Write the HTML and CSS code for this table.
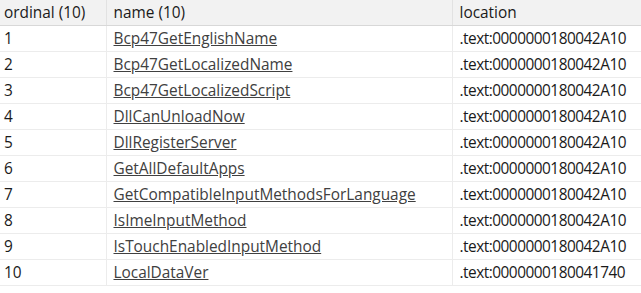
FILE: index.html
```html
<!DOCTYPE html>
<html lang="en">
<head>
  <meta charset="UTF-8">
  <title>Exports</title>
  <link rel="stylesheet" href="styles.css">
</head>
<body>
  <table class="exports">
    <colgroup>
      <col class="col-ordinal">
      <col class="col-name">
      <col class="col-location">
    </colgroup>
    <thead>
      <tr>
        <th>ordinal (10)</th>
        <th>name (10)</th>
        <th>location</th>
      </tr>
    </thead>
    <tbody>
      <tr><td>1</td><td><a href="#">Bcp47GetEnglishName</a></td><td class="loc">.text:0000000180042A10</td></tr>
      <tr><td>2</td><td><a href="#">Bcp47GetLocalizedName</a></td><td class="loc">.text:0000000180042A10</td></tr>
      <tr><td>3</td><td><a href="#">Bcp47GetLocalizedScript</a></td><td class="loc">.text:0000000180042A10</td></tr>
      <tr><td>4</td><td><a href="#">DllCanUnloadNow</a></td><td class="loc">.text:0000000180042A10</td></tr>
      <tr><td>5</td><td><a href="#">DllRegisterServer</a></td><td class="loc">.text:0000000180042A10</td></tr>
      <tr><td>6</td><td><a href="#">GetAllDefaultApps</a></td><td class="loc">.text:0000000180042A10</td></tr>
      <tr><td>7</td><td><a href="#">GetCompatibleInputMethodsForLanguage</a></td><td class="loc">.text:0000000180042A10</td></tr>
      <tr><td>8</td><td><a href="#">IsImeInputMethod</a></td><td class="loc">.text:0000000180042A10</td></tr>
      <tr><td>9</td><td><a href="#">IsTouchEnabledInputMethod</a></td><td class="loc">.text:0000000180042A10</td></tr>
      <tr><td>10</td><td><a href="#">LocalDataVer</a></td><td class="loc">.text:0000000180041740</td></tr>
    </tbody>
  </table>
</body>
</html>
```

FILE: styles.css
```css
body {
  margin: 0;
  background: #fff;
  font-family: "Open Sans", sans-serif;
  font-size: 15.4px;
  color: #1a1a1a;
}
.exports {
  border-collapse: collapse;
  table-layout: fixed;
  width: 641px;
}
.col-ordinal {
  width: 106px;
}
.col-name {
  width: 346px;
}
.exports th {
  height: 25px;
  padding: 0 7px;
  text-align: left;
  font-weight: normal;
  background: #f2f2f2;
  border-left: 1px solid #e2e2e2;
  border-bottom: 1px solid #d8d8d8;
}
.exports td {
  height: 25px;
  padding: 0 7px;
  border-left: 1px solid #ececec;
  border-bottom: 1px solid #ececec;
  white-space: nowrap;
}
.exports th:first-child,
.exports td:first-child {
  border-left: none;
  padding-left: 4px;
}
.exports td.loc {
  letter-spacing: -0.5px;
}
.exports a {
  color: #404040;
  text-decoration: underline;
}
```
